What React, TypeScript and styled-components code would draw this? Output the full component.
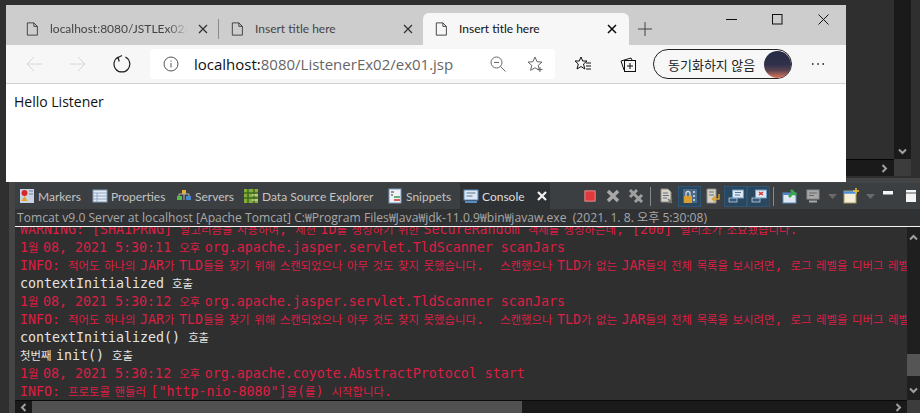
import React from 'react'
import styled, { createGlobalStyle } from 'styled-components'

const Global = createGlobalStyle`
  html, body { margin: 0; padding: 0; background: #2f2f2f; }
  * { box-sizing: border-box; }
`

const UI_FONT = `"Open Sans", "Noto Sans CJK KR", sans-serif`
const TAB_FONT = `Lato, "Noto Sans CJK KR", sans-serif`
const MONO_FONT = `"DejaVu Sans Mono", "Noto Sans CJK KR", monospace`

const Desktop = styled.div`
  position: relative;
  width: 920px;
  height: 413px;
  overflow: hidden;
  display: flex;
  flex-direction: column;
  background: #2f2f2f;
`

/* ---------- editor behind the browser ---------- */

const Editor = styled.div`
  height: 178px;
  flex: none;
  display: grid;
  grid-template-columns: 1fr 48px 17px 9px;
  grid-template-rows: 159px 17px 2px;
`

const EditorVScroll = styled.div`
  grid-column: 3;
  grid-row: 1;
  background: #1a1a1a;
  display: flex;
  align-items: flex-end;
  justify-content: center;
  padding-bottom: 3px;
`

const EditorHScroll = styled.div`
  grid-column: 2;
  grid-row: 2;
  background: #1a1a1a;
  border-top: 1px solid #050505;
  display: flex;
  align-items: center;
  justify-content: flex-end;
  padding-right: 5px;
`

const EditorCorner = styled.div`
  grid-column: 3;
  grid-row: 2;
  background: #3c3c3c;
`

/* ---------- browser window ---------- */

const BrowserWindow = styled.div`
  position: absolute;
  left: 6px;
  top: 5px;
  width: 840px;
  height: 177px;
  display: flex;
  flex-direction: column;
  background: #fff;
  font-family: ${UI_FONT};
  z-index: 2;
`

const TabStrip = styled.div`
  height: 40px;
  flex: none;
  display: flex;
  align-items: flex-end;
  padding-left: 8px;
  background: #cdcdcd;
`

const Tab = styled.div<{ $active?: boolean; $width: number }>`
  width: ${p => p.$width}px;
  height: 32px;
  flex: none;
  display: flex;
  align-items: center;
  gap: 10px;
  padding: 0 ${p => (p.$active ? 12 : 10)}px 0 12px;
  color: ${p => (p.$active ? '#111' : '#444')};
  background: ${p => (p.$active ? '#f7f7f7' : 'transparent')};
  border-radius: 6px 6px 0 0;
`

const TabTitle = styled.span<{ $fade?: boolean }>`
  flex: 1;
  min-width: 0;
  overflow: hidden;
  white-space: nowrap;
  font-family: ${TAB_FONT};
  font-size: 12px;
  line-height: 32px;
  ${p => p.$fade && `-webkit-mask-image: linear-gradient(to right, #000 85%, transparent 100%);`}
`

const TabDivider = styled.div`
  width: 1px;
  height: 20px;
  flex: none;
  margin-bottom: 6px;
  background: #8a8a8a;
`

const NewTab = styled.div`
  width: 32px;
  height: 32px;
  flex: none;
  display: flex;
  align-items: center;
  justify-content: center;
`

const WindowControls = styled.div`
  margin-left: auto;
  align-self: flex-start;
  display: flex;
`

const WindowButton = styled.div`
  width: 46px;
  height: 29px;
  display: flex;
  align-items: center;
  justify-content: center;
`

const NavBar = styled.div`
  height: 38px;
  flex: none;
  display: flex;
  align-items: center;
  padding-left: 6px;
  background: #f7f7f7;
  border-bottom: 1px solid #d2d2d2;
  box-sizing: content-box;
`

const NavButton = styled.div<{ $width?: number }>`
  width: ${p => p.$width ?? 44}px;
  height: 30px;
  flex: none;
  display: flex;
  align-items: center;
  justify-content: center;
`

const AddressBar = styled.div`
  width: 405px;
  height: 30px;
  flex: none;
  margin: 0 5px 0 6px;
  padding-left: 13px;
  display: flex;
  align-items: center;
  background: #fff;
  border-radius: 4px;
`

const Url = styled.span`
  margin-left: 15px;
  font-size: 15px;
  color: #666;
  white-space: nowrap;
  b {
    font-weight: 400;
    color: #111;
  }
`

const AddressActions = styled.div`
  margin-left: auto;
  padding-right: 2px;
  display: flex;
`

const SyncPill = styled.div`
  width: 139px;
  height: 30px;
  flex: none;
  margin-left: 3px;
  padding: 0 0 0 14px;
  display: flex;
  align-items: center;
  justify-content: space-between;
  border: 1.5px solid #222;
  border-radius: 15px;
  font-size: 13px;
  color: #222;
  white-space: nowrap;
`

const Avatar = styled.div`
  width: 27px;
  height: 27px;
  flex: none;
  border-radius: 50%;
  background: linear-gradient(#262b45 0%, #30304a 50%, #5a4350 72%, #e0775a 100%);
`

const PageBody = styled.div`
  flex: 1;
  padding: 9px 8px;
  font-size: 14px;
  line-height: 18px;
  color: #111;
`

/* ---------- eclipse console panel ---------- */

const Panel = styled.div`
  flex: 1;
  min-height: 0;
  margin-left: 9px;
  padding: 5px 0 0 6px;
  display: flex;
  flex-direction: column;
  background: #434547;
`

const ViewBar = styled.div`
  height: 26px;
  flex: none;
  display: flex;
  align-items: stretch;
  padding-left: 4px;
  background: #3c3f41;
  font-family: ${TAB_FONT};
  font-size: 12px;
  color: #c4c4c4;
`

const ViewTab = styled.div<{ $active?: boolean; $width: number }>`
  width: ${p => p.$width}px;
  flex: none;
  display: flex;
  align-items: center;
  gap: 3px;
  white-space: nowrap;
  ${p => p.$active && `background: #2f3235; color: #ddd; padding-left: 3px;`}
`

const ViewClose = styled.span`
  margin-left: 9px;
  display: flex;
`

const Tools = styled.div`
  margin-left: auto;
  display: flex;
  align-items: center;
`

const Tool = styled.div<{ $width?: number; $on?: boolean }>`
  width: ${p => p.$width ?? 23}px;
  height: 21px;
  flex: none;
  display: flex;
  align-items: center;
  justify-content: center;
  ${p => p.$on && `background: #2a4760; box-shadow: inset 0 0 0 1px #2f5474;`}
`

const ToolSeparator = styled.div<{ $after: number }>`
  width: 1px;
  height: 19px;
  flex: none;
  margin: 0 ${p => p.$after}px 0 3px;
  background: #8a8a8a;
`

const ConsoleInfo = styled.div`
  height: 18px;
  flex: none;
  padding-left: 2px;
  background: #2f3133;
  font-family: ${UI_FONT};
  font-size: 12.13px;
  line-height: 17px;
  color: #a8a8a8;
  white-space: pre;
  overflow: hidden;
  border-bottom: 1px solid #f4f4f4;
`

const ConsoleBody = styled.div`
  flex: 1;
  min-height: 0;
  display: grid;
  grid-template-columns: 1fr 13px;
  grid-template-rows: 1fr 13px;
  background: #2f2f2f;
`

const ConsoleText = styled.div`
  min-width: 0;
  min-height: 0;
  padding-left: 5px;
  overflow: hidden;
  display: flex;
  flex-direction: column;
  justify-content: flex-end;
`

const Line = styled.div<{ $error?: boolean }>`
  height: 18px;
  flex: none;
  font-family: ${MONO_FONT};
  font-size: 13.3px;
  line-height: 18px;
  white-space: pre;
  color: ${p => (p.$error ? '#dc1e44' : '#e4e4e4')};
`

const Hangul = styled.span`
  font-family: "Noto Sans CJK KR", sans-serif;
  font-size: 11.4px;
  word-spacing: 2px;
`

const VScroll = styled.div`
  background: #1f1f1f;
  display: flex;
  flex-direction: column;
  align-items: center;
  padding: 6px 0 5px;
`

const VThumb = styled.div`
  width: 100%;
  height: 22px;
  margin: 112px 0 auto;
  background: #555;
`

const HScroll = styled.div`
  background: #1a1a1a;
  border-top: 1px solid #0a0a0a;
  display: flex;
  align-items: center;
  padding-right: 4px;
`

const HLeftButton = styled.div`
  width: 17px;
  flex: none;
  display: flex;
  justify-content: center;
`

const HThumb = styled.div`
  width: 490px;
  height: 100%;
  margin-right: auto;
  background: #515151;
`

const ScrollCorner = styled.div`
  background: #3c3c3c;
`

/* ---------- drawings ---------- */

const Svg: React.FC<React.SVGProps<SVGSVGElement> & { size?: number }> = ({ size = 16, children, ...rest }) => (
  <svg width={size} height={size} viewBox="0 0 16 16" fill="none" style={{ flex: 'none' }} {...rest}>
    {children}
  </svg>
)

const DocIcon = () => (
  <Svg width={14} height={16}>
    <path d="M1.500 1h7.500l4 4v10h-11.500z M9 1v4h4" stroke="#333" strokeWidth="1" />
  </Svg>
)

const CloseIcon = ({ color = '#333', width = 1.3 }: { color?: string; width?: number }) => (
  <Svg size={10} viewBox="0 0 10 10">
    <path d="M1 1l8 8M9 1l-8 8" stroke={color} strokeWidth={width} />
  </Svg>
)

const Chevron = ({ dir }: { dir: 'up' | 'down' | 'left' | 'right' }) => {
  const rot = { up: 0, right: 90, down: 180, left: 270 }[dir]
  return (
    <Svg size={9} viewBox="0 0 9 9">
      <path d="M1 6.500L4.500 3 8 6.500" stroke="#a0a0a0" strokeWidth="2" transform={`rotate(${rot} 4.500 4.500)`} />
    </Svg>
  )
}

const GreyDoc = ({ badge }: { badge?: string }) => (
  <Svg>
    <path d="M3 1h7l3 3v10H3z" fill="#d8d3c4" stroke="#8c8c8c" />
    <path d="M5 5h5M5 7.500h6M5 10h4" stroke="#5e6f88" />
    {badge && <path d="M10 11l4 4M14 11l-4 4" stroke={badge} strokeWidth="1.500" />}
  </Svg>
)

const ConsoleBubble = ({ red }: { red?: boolean }) => (
  <Svg>
    <rect x="1" y="10" width="8" height="4" fill="#3a5a7a" stroke="#cfe0f0" strokeWidth=".7" />
    <rect x="4.500" y="2" width="11" height="8" fill="#dfe8f2" stroke="#6f9ac2" />
    {red ? (
      <path d="M8 4l4 3M12 4l-4 3" stroke="#d63030" strokeWidth="1.500" />
    ) : (
      <path d="M7 4.500h6M7 7h5" stroke="#54799c" />
    )}
  </Svg>
)

const DropCaret = () => (
  <Svg size={9} viewBox="0 0 9 9">
    <path d="M0 2h9L4.500 7z" fill="#6a6a6a" />
  </Svg>
)

const mono = (text: string) =>
  text.split(/([가-힣]+(?: [가-힣]+)* ?)/g).map((part, i) =>
    i % 2 ? <Hangul key={i}>{part}</Hangul> : part,
  )

const scanInfo =
  'INFO: 적어도 하나의 JAR가 TLD들을 찾기 위해 스캔되었으나 아무 것도 찾지 못했습니다.  스캔했으나 TLD가 없는 JAR들의 전체 목록을 보시려면, 로그 레벨을 디버그 레벨로 설정하십시오.'

const logLines: { text: string; error?: boolean }[] = [
  { text: 'WARNING: [SHA1PRNG] 알고리즘을 사용하여, 세션 ID를 생성하기 위한 SecureRandom 객체를 생성하는데, [200] 밀리초가 소요됐습니다.', error: true },
  { text: '1월 08, 2021 5:30:11 오후 org.apache.jasper.servlet.TldScanner scanJars', error: true },
  { text: scanInfo, error: true },
  { text: 'contextInitialized 호출' },
  { text: '1월 08, 2021 5:30:12 오후 org.apache.jasper.servlet.TldScanner scanJars', error: true },
  { text: scanInfo, error: true },
  { text: 'contextInitialized() 호출' },
  { text: '첫번째 init() 호출' },
  { text: '1월 08, 2021 5:30:12 오후 org.apache.coyote.AbstractProtocol start', error: true },
  { text: 'INFO: 프로토콜 핸들러 ["http-nio-8080"]을(를) 시작합니다.', error: true },
]

const App = () => (
  <Desktop>
    <Global />

    <Editor>
      <EditorVScroll>
        <Chevron dir="down" />
      </EditorVScroll>
      <EditorHScroll>
        <Chevron dir="right" />
      </EditorHScroll>
      <EditorCorner />
    </Editor>

    <BrowserWindow>
      <TabStrip>
        <Tab $width={204}>
          <DocIcon />
          <TabTitle $fade>localhost:8080/JSTLEx02/ex01.jsp</TabTitle>
          <CloseIcon />
        </Tab>
        <TabDivider />
        <Tab $width={204}>
          <DocIcon />
          <TabTitle>Insert title here</TabTitle>
          <CloseIcon />
        </Tab>
        <Tab $active $width={206}>
          <DocIcon />
          <TabTitle>Insert title here</TabTitle>
          <CloseIcon color="#111" width={1.6} />
        </Tab>
        <NewTab>
          <Svg size={14} viewBox="0 0 14 14">
            <path d="M7 0v14M0 7h14" stroke="#444" strokeWidth="1" />
          </Svg>
        </NewTab>
        <WindowControls>
          <WindowButton>
            <Svg size={11} viewBox="0 0 11 11">
              <path d="M0 5.500h11" stroke="#111" />
            </Svg>
          </WindowButton>
          <WindowButton>
            <Svg size={11} viewBox="0 0 11 11">
              <rect x=".5" y=".5" width="9.500" height="9.500" stroke="#111" />
            </Svg>
          </WindowButton>
          <WindowButton>
            <Svg size={11} viewBox="0 0 11 11">
              <path d="M.5.500l10 10M10.500.500l-10 10" stroke="#111" />
            </Svg>
          </WindowButton>
        </WindowControls>
      </TabStrip>

      <NavBar>
        <NavButton>
          <Svg>
            <path d="M16 8H1M8 1L1 8l7 7" stroke="#d6d6d6" />
          </Svg>
        </NavButton>
        <NavButton>
          <Svg>
            <path d="M0 8h15M8 1l7 7-7 7" stroke="#d6d6d6" />
          </Svg>
        </NavButton>
        <NavButton>
          <Svg size={18}>
            <path d="M11 1.800A7 7 0 1 1 4.800 1.800M4.500 2.200L8 .5M4.500 2.200L5.500 5.800" stroke="#222" strokeWidth="1.100" />
          </Svg>
        </NavButton>
        <AddressBar>
          <Svg>
            <circle cx="8" cy="8" r="7" stroke="#555" />
            <path d="M8 7v4.500M8 4.500v1.200" stroke="#555" />
          </Svg>
          <Url>
            <b>localhost:</b>8080/ListenerEx02/ex01.jsp
          </Url>
          <AddressActions>
            <NavButton $width={37}>
              <Svg>
                <circle cx="6.500" cy="6.500" r="5.500" stroke="#666" />
                <path d="M10.500 10.500l5 5M4 6.500h5" stroke="#666" />
              </Svg>
            </NavButton>
            <NavButton $width={37}>
              <Svg>
                <path d="M8 1l2 4.700 5 .4-3.800 3.300 1.200 4.900L8 11.800l-4.400 2.500 1.200-4.900L1 6.100l5-.4z" stroke="#666" />
                <path d="M13 11v5M10.500 13.500h5" stroke="#666" />
              </Svg>
            </NavButton>
          </AddressActions>
        </AddressBar>
        <NavButton $width={45}>
          <Svg>
            <path d="M6 1l1.700 4H12L8.500 8l1.300 5L6 10.500 2 13l1.300-5L0 5h4.300z" stroke="#111" />
            <path d="M11 7h5M11 10h5M11 13h5" stroke="#111" />
          </Svg>
        </NavButton>
        <NavButton $width={45}>
          <Svg>
            <rect x="4.500" y="4.500" width="11" height="11" stroke="#111" />
            <path d="M10 7v6M7 10h6M4 14L1 5l10-3 1 2" stroke="#111" />
          </Svg>
        </NavButton>
        <SyncPill>
          동기화하지 않음
          <Avatar />
        </SyncPill>
        <NavButton $width={52}>
          <Svg>
            <path d="M2 8h1.500M7.300 8h1.500M12.500 8H14" stroke="#111" strokeWidth="1.500" />
          </Svg>
        </NavButton>
      </NavBar>

      <PageBody>Hello Listener</PageBody>
    </BrowserWindow>

    <Panel>
      <ViewBar>
        <ViewTab $width={73}>
          <Svg>
            <rect x="1" y="1" width="14" height="14" fill="#c8d4e4" />
            <circle cx="5.500" cy="5" r="3" fill="#d8262c" />
            <path d="M5.500 8l3 5h-6z" fill="#e8a020" />
            <path d="M10 3h4M10 6h4" stroke="#6a84a4" />
          </Svg>
          Markers
        </ViewTab>
        <ViewTab $width={84}>
          <Svg>
            <rect x="1" y="2" width="14" height="12" fill="#e6ebf2" stroke="#7f9abb" />
            <path d="M1 5h14M1 8h14M1 11h14M5 5v9" stroke="#92a8c4" />
          </Svg>
          Properties
        </ViewTab>
        <ViewTab $width={67}>
          <Svg>
            <rect x="6" y="2" width="4" height="4" fill="#e8b030" />
            <rect x="1" y="8" width="5" height="4" fill="#58b848" />
            <rect x="10" y="8" width="5" height="4" fill="#4c88d0" />
            <path d="M3 8V6h10v2M8 6v6" stroke="#b0b0b0" />
          </Svg>
          Servers
        </ViewTab>
        <ViewTab $width={144}>
          <Svg>
            <rect x="1" y="1" width="14" height="14" fill="#86ac3a" />
            <path d="M1 5h14M1 10h14M5 1v14M11 1v14" stroke="#3e6a20" strokeWidth="1.500" />
            <path d="M9 7h6M9 12h6" stroke="#e8e8c0" />
          </Svg>
          Data Source Explorer
        </ViewTab>
        <ViewTab $width={73}>
          <Svg>
            <rect x="2" y="1" width="12" height="14" fill="#eef2f6" stroke="#7f9abb" />
            <path d="M4 4h3M4 7h2" stroke="#333" />
            <path d="M7 9h6" stroke="#3a9a48" strokeWidth="1.500" />
            <path d="M7 12h6" stroke="#d03030" strokeWidth="1.500" />
          </Svg>
          Snippets
        </ViewTab>
        <ViewTab $active $width={90}>
          <Svg>
            <rect x="1" y="2" width="14" height="10" fill="#dfe8f2" stroke="#5b8bc0" />
            <path d="M3.500 5h9M3.500 8h6" stroke="#54799c" />
            <path d="M2 14h12" stroke="#5b8bc0" strokeWidth="2" />
          </Svg>
          Console
          <ViewClose>
            <CloseIcon color="#f2f2f2" width={2.2} />
          </ViewClose>
        </ViewTab>
        <Tools>
          <Tool>
            <Svg size={12} viewBox="0 0 14 14">
              <rect x="1" y="1" width="12" height="12" fill="#e03a3e" stroke="#f09a9a" />
            </Svg>
          </Tool>
          <Tool>
            <Svg>
              <path d="M3 3l10 10M13 3L3 13" stroke="#a8a8a8" strokeWidth="3.500" />
            </Svg>
          </Tool>
          <Tool>
            <Svg>
              <path d="M2 2l7 7M9 2L2 9M7 7l7 7M14 7l-7 7" stroke="#a0a0a0" strokeWidth="3" />
            </Svg>
          </Tool>
          <ToolSeparator $after={3} />
          <Tool $width={24}>
            <GreyDoc badge="#7a7a7a" />
          </Tool>
          <Tool $on>
            <Svg>
              <rect x="1" y="1" width="14" height="14" fill="#4a6a88" />
              <rect x="2" y="8" width="8" height="7" fill="#d8a030" />
              <path d="M4 8V5.500a2 2 0 0 1 4 0V8" stroke="#d8d8d8" strokeWidth="1.300" />
              <path d="M12 3v2M12 7v2M12 11v2" stroke="#e4e4e4" strokeWidth="1.500" />
            </Svg>
          </Tool>
          <Tool>
            <Svg>
              <path d="M2 1h9v14H2z" fill="#d8d3c4" stroke="#8c8c8c" />
              <path d="M4 4h5M4 7h5" stroke="#5e6f88" />
              <path d="M14 6v5H8M10 8.500L7.500 11l2.500 2.500" stroke="#d8a030" strokeWidth="1.500" />
            </Svg>
          </Tool>
          <Tool $on>
            <ConsoleBubble />
          </Tool>
          <Tool $on>
            <ConsoleBubble red />
          </Tool>
          <ToolSeparator $after={8} />
          <Tool $width={16}>
            <Svg>
              <rect x="1" y="5" width="13" height="10" fill="#dfe8f2" stroke="#5b8bc0" />
              <path d="M1 6h13" stroke="#4a86c8" strokeWidth="2" />
              <path d="M7 9l4-4M9 2l5 5" stroke="#3aa84a" strokeWidth="2.500" />
            </Svg>
          </Tool>
          <Tool $width={30}>
            <Svg>
              <rect x="2" y="2" width="12" height="9" fill="#a8a8a8" stroke="#8a8a8a" />
              <path d="M4 5h8M4 7.500h5" stroke="#666" />
              <path d="M4 13.500h8" stroke="#a8a8a8" strokeWidth="2" />
            </Svg>
          </Tool>
          <Tool $width={8}>
            <DropCaret />
          </Tool>
          <Tool $width={30}>
            <Svg>
              <rect x="1" y="3" width="12" height="12" fill="#f4efd8" stroke="#a89a60" />
              <path d="M1 4.500h12" stroke="#4a90d8" strokeWidth="2.500" />
              <path d="M13 0v6M10 3h6" stroke="#e8c040" strokeWidth="1.500" />
            </Svg>
          </Tool>
          <Tool $width={8}>
            <DropCaret />
          </Tool>
          <Tool $width={28}>
            <Svg size={12} viewBox="0 0 12 12">
              <rect x="1" y="1" width="10" height="3.500" fill="#f4f4f4" />
            </Svg>
          </Tool>
          <Tool $width={18}>
            <Svg size={14} viewBox="0 0 14 14">
              <rect x="2" y="1" width="10" height="12" fill="#f4f4f4" />
              <path d="M2 4h10" stroke="#555" />
            </Svg>
          </Tool>
        </Tools>
      </ViewBar>

      <ConsoleInfo>Tomcat v9.0 Server at localhost [Apache Tomcat] C:₩Program Files₩Java₩jdk-11.0.9₩bin₩javaw.exe  (2021. 1. 8. 오후 5:30:08)</ConsoleInfo>

      <ConsoleBody>
        <ConsoleText>
          {logLines.map((line, i) => (
            <Line key={i} $error={line.error}>
              {mono(line.text)}
            </Line>
          ))}
        </ConsoleText>
        <VScroll>
          <Chevron dir="up" />
          <VThumb />
          <Chevron dir="down" />
        </VScroll>
        <HScroll>
          <HLeftButton>
            <Chevron dir="left" />
          </HLeftButton>
          <HThumb />
          <Chevron dir="right" />
        </HScroll>
        <ScrollCorner />
      </ConsoleBody>
    </Panel>
  </Desktop>
)

export default App
